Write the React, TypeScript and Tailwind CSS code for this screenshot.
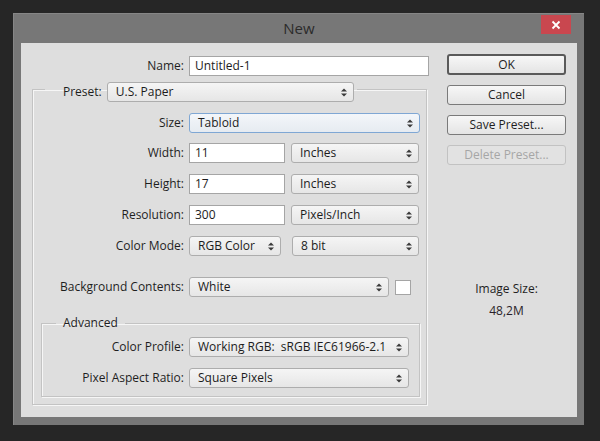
import React from "react";

const font = { fontFamily: '"Open Sans", "Noto Sans", "Liberation Sans", sans-serif' };

function Arrows() {
  return (
    <svg width="6" height="9" viewBox="0 0 6 9" className="shrink-0">
      <path d="M0 3.6 L3 0.4 L6 3.6 Z" fill="#3a3a3a" />
      <path d="M0 5.4 L6 5.4 L3 8.6 Z" fill="#3a3a3a" />
    </svg>
  );
}

function Select({
  value,
  width,
  focused = false,
}: {
  value: string;
  width: string;
  focused?: boolean;
}) {
  return (
    <div
      className={[
        "flex h-[20px] items-center justify-between rounded-[3px] border pl-[8px] pr-[6px] text-[12px] leading-none text-[#1c1c1c]",
        width,
        focused
          ? "border-[#7fa7d4] bg-[linear-gradient(#f3f6fa,#e6ebf1)]"
          : "border-[#adadad] bg-[linear-gradient(#f5f5f5,#e6e6e6)]",
      ].join(" ")}
    >
      <span className="whitespace-pre">{value}</span>
      <Arrows />
    </div>
  );
}

function Input({ value, width }: { value: string; width: string }) {
  return (
    <div
      className={[
        "flex h-[20px] items-center border border-[#a5a5a5] bg-white pl-[5px] text-[12px] leading-none text-[#1c1c1c]",
        width,
      ].join(" ")}
    >
      {value}
    </div>
  );
}

function Row({
  label,
  labelWidth,
  className = "",
  children,
}: {
  label: string;
  labelWidth: string;
  className?: string;
  children: React.ReactNode;
}) {
  return (
    <div className={["flex h-[20px] items-center", className].join(" ")}>
      <div className={["shrink-0 pr-[5px] text-right text-[12px] leading-none text-[#1e1e1e]", labelWidth].join(" ")}>
        {label}
      </div>
      {children}
    </div>
  );
}

function Button({
  label,
  primary = false,
  disabled = false,
  className = "",
}: {
  label: string;
  primary?: boolean;
  disabled?: boolean;
  className?: string;
}) {
  return (
    <div
      className={[
        "flex items-center justify-center rounded-[3px] text-[12px] leading-none",
        primary
          ? "h-[21px] border-2 border-[#5a5a5a] bg-[linear-gradient(#f7f7f7,#e4e4e4)] text-[#1e1e1e]"
          : disabled
            ? "h-[20px] border border-[#c2c2c2] bg-[#e2e2e2] text-[#a6a6a6]"
            : "h-[20px] border border-[#7a7a7a] bg-[linear-gradient(#f7f7f7,#e4e4e4)] text-[#1e1e1e]",
        className,
      ].join(" ")}
    >
      {label}
    </div>
  );
}

export default function App() {
  return (
    <div className="min-h-[441px] bg-[#262626] pl-[13px] pt-[13px]" style={font}>
      <div className="flex h-[412px] w-[571px] flex-col border-t border-l border-[#868686] bg-[#777777] px-[7px] pb-[8px]">
        <div className="relative flex h-[29px] items-center justify-center">
          <span className="text-[15px] leading-none text-[#2b2b2b]">New</span>
          <div className="absolute right-[6px] top-[1px] flex h-[19px] w-[30px] items-center justify-center bg-[#c9474f]">
            <svg width="10" height="10" viewBox="0 0 10 10">
              <path d="M1.5 1.5 L8.5 8.5 M8.5 1.5 L1.5 8.5" stroke="#ffffff" strokeWidth="1.8" />
            </svg>
          </div>
        </div>

        <div className="flex flex-1 bg-[#dedede]">
          {/* left: form */}
          <div className="w-[426px] pt-[13px]">
            <Row label="Name:" labelWidth="w-[168px]">
              <Input value="Untitled-1" width="w-[240px]" />
            </Row>

            <fieldset className="ml-[11px] w-[395px] border border-[#c3c3c3] pb-[7px] shadow-[inset_1px_1px_0_#f6f6f6,1px_1px_0_#f6f6f6]">
              <legend className="ml-[12px] pl-[18px] pr-[3px] pt-[6px]">
                <div className="flex h-[20px] items-center">
                  <span className="pr-[5px] text-[12px] leading-none text-[#1e1e1e]">Preset:</span>
                  <Select value="U.S. Paper" width="w-[247px]" />
                </div>
              </legend>

              <Row label="Size:" labelWidth="w-[156px]" className="mt-[11px]">
                <Select value="Tabloid" width="w-[231px]" focused />
              </Row>
              <Row label="Width:" labelWidth="w-[156px]" className="mt-[10px]">
                <Input value="11" width="w-[96px]" />
                <div className="ml-[6px]">
                  <Select value="Inches" width="w-[128px]" />
                </div>
              </Row>
              <Row label="Height:" labelWidth="w-[156px]" className="mt-[11px]">
                <Input value="17" width="w-[96px]" />
                <div className="ml-[6px]">
                  <Select value="Inches" width="w-[128px]" />
                </div>
              </Row>
              <Row label="Resolution:" labelWidth="w-[156px]" className="mt-[11px]">
                <Input value="300" width="w-[96px]" />
                <div className="ml-[6px]">
                  <Select value="Pixels/Inch" width="w-[128px]" />
                </div>
              </Row>
              <Row label="Color Mode:" labelWidth="w-[156px]" className="mt-[11px]">
                <Select value="RGB Color" width="w-[92px]" />
                <div className="ml-[11px]">
                  <Select value="8 bit" width="w-[127px]" />
                </div>
              </Row>
              <Row label="Background Contents:" labelWidth="w-[156px]" className="mt-[21px]">
                <Select value="White" width="w-[200px]" />
                <div className="ml-[6px] h-[15px] w-[16px] border border-[#a5a5a5] bg-white" />
              </Row>

              <fieldset className="ml-[8px] mt-[18px] w-[379px] border border-[#c3c3c3] pb-[8px] shadow-[inset_1px_1px_0_#f6f6f6,1px_1px_0_#f6f6f6]">
                <legend className="ml-[14px] px-[7px] text-[12px] leading-[16px] text-[#1e1e1e]">Advanced</legend>
                <Row label="Color Profile:" labelWidth="w-[147px]" className="mt-[6px]">
                  <Select value="Working RGB:  sRGB IEC61966-2.1" width="w-[220px]" />
                </Row>
                <Row label="Pixel Aspect Ratio:" labelWidth="w-[147px]" className="mt-[11px]">
                  <Select value="Square Pixels" width="w-[220px]" />
                </Row>
              </fieldset>
            </fieldset>
          </div>

          {/* right: buttons */}
          <div className="flex w-[119px] flex-col pt-[11px]">
            <Button label="OK" primary />
            <Button label="Cancel" className="mt-[10px]" />
            <Button label="Save Preset..." className="mt-[10px]" />
            <Button label="Delete Preset..." disabled className="mt-[10px]" />
            <div className="mt-[116px] text-center text-[12px] leading-[16px] text-[#1e1e1e]">Image Size:</div>
            <div className="mt-[6px] text-center text-[12px] leading-[16px] text-[#2a1f2a]">48,2M</div>
          </div>
        </div>
      </div>
    </div>
  );
}
